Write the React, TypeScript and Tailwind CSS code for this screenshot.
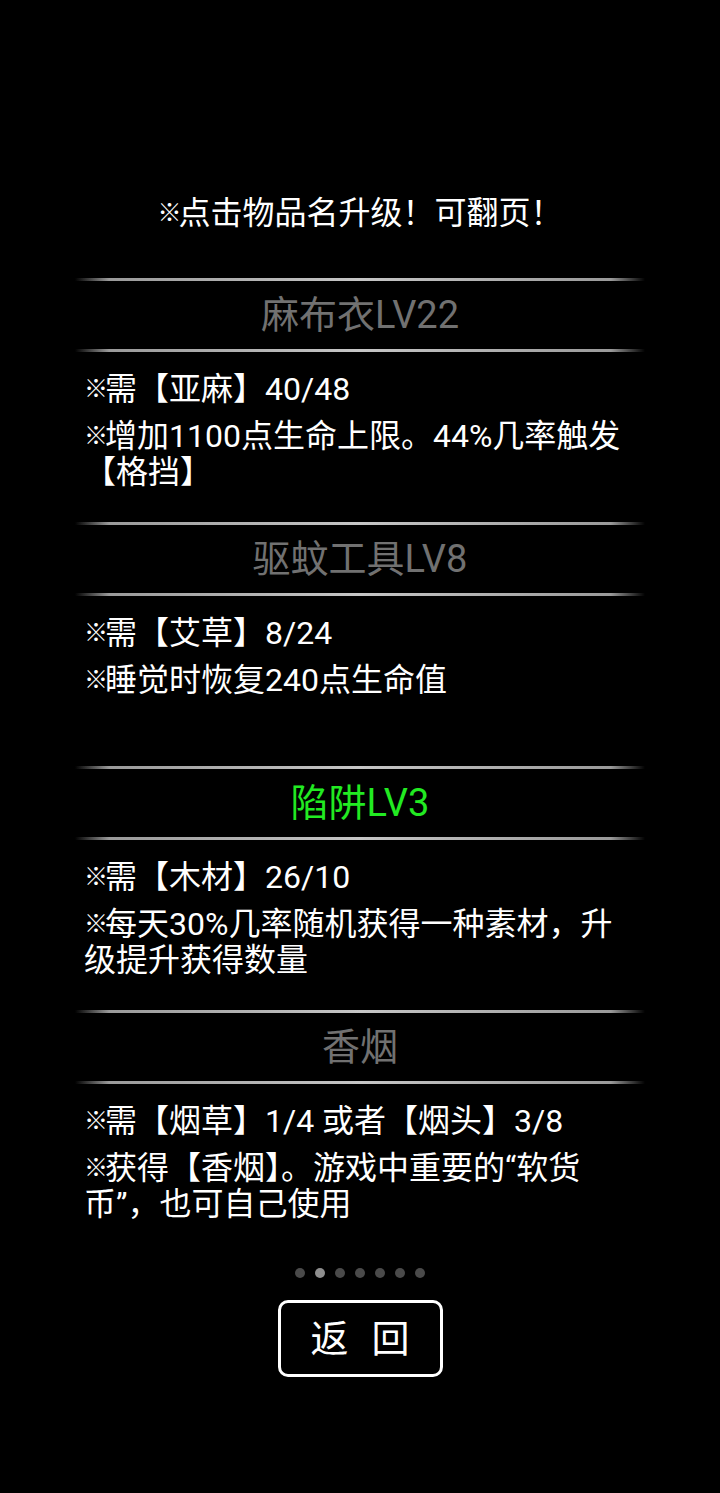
import React from "react"

type Item = {
  name: string
  active?: boolean
  lines: string[]
}

const items: Item[] = [
  {
    name: "麻布衣LV22",
    lines: ["需【亚麻】40/48", "增加1100点生命上限。44%几率触发【格挡】"],
  },
  {
    name: "驱蚊工具LV8",
    lines: ["需【艾草】8/24", "睡觉时恢复240点生命值"],
  },
  {
    name: "陷阱LV3",
    active: true,
    lines: ["需【木材】26/10", "每天30%几率随机获得一种素材，升级提升获得数量"],
  },
  {
    name: "香烟",
    lines: ["需【烟草】1/4 或者【烟头】3/8", "获得【香烟】。游戏中重要的“软货币”，也可自己使用"],
  },
]

function Divider() {
  return (
    <div className="h-[3px] w-full bg-[linear-gradient(90deg,transparent,#9a9a9a_6%,#c6c6c6_50%,#9a9a9a_94%,transparent)]" />
  )
}

// reference mark, narrower than a full-width glyph
function Mark() {
  return <span className="align-[3px] text-[24px] tracking-[-3px]">※</span>
}

function UpgradeItem({ item }: { item: Item }) {
  return (
    <div className="flex h-[244px] flex-col">
      <Divider />
      <div
        className={
          "flex h-[68px] items-center justify-center text-[38px] leading-none " +
          (item.active ? "text-[#22ea22]" : "text-[#717171]")
        }
      >
        {item.name}
      </div>
      <Divider />
      <div className="flex flex-col gap-[11px] px-[9px] pt-[19px] text-[32px] leading-[36px] text-white">
        {item.lines.map((line) => (
          <p key={line}>
            <Mark />
            {line}
          </p>
        ))}
      </div>
    </div>
  )
}

export default function App() {
  return (
    <div className="min-h-[1493px] w-full bg-black font-[Roboto,'Noto_Sans_CJK_SC',sans-serif] text-white">
      <div className="flex flex-col items-center pt-[195px]">
        <p className="text-[32px] leading-[36px]">
          <Mark />
          点击物品名升级！可翻页！
        </p>

        <div className="mt-[47px] w-[570px]">
          {items.map((item) => (
            <UpgradeItem key={item.name} item={item} />
          ))}
        </div>

        {/* page indicator */}
        <div className="mt-[14px] flex gap-[10px]">
          {[0, 1, 2, 3, 4, 5, 6].map((i) => (
            <span
              key={i}
              className={"h-[10px] w-[10px] rounded-full " + (i === 1 ? "bg-[#8e8e8e]" : "bg-[#4a4a4a]")}
            />
          ))}
        </div>

        <button className="mt-[22px] flex h-[77px] w-[165px] items-center justify-center gap-[23px] rounded-[10px] border-[3px] border-white text-[38px] leading-none text-white">
          <span>返</span>
          <span>回</span>
        </button>
      </div>
    </div>
  )
}
